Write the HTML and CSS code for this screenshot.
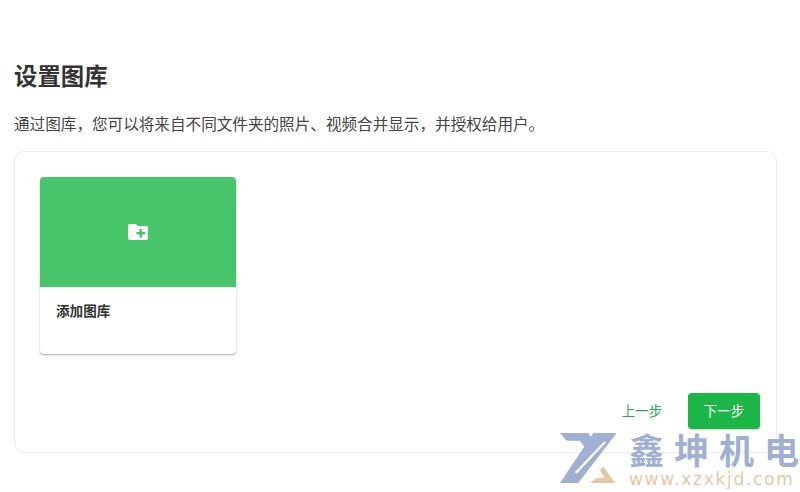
FILE: index.html
```html
<!DOCTYPE html>
<html lang="zh-CN">
<head>
  <meta charset="UTF-8" />
  <title>设置图库</title>
  <link rel="stylesheet" href="styles.css">
</head>
<body>
  <div class="page">
    <h2 class="title">设置图库</h2>
    <p class="intro">通过图库，您可以将来自不同文件夹的照片、视频合并显示，并授权给用户。</p>

    <div class="panel">
      <div class="library-card">
        <div class="library-cover">
          <svg class="folder-icon" viewBox="0 0 24 24">
            <path fill="#fff" d="M4 4c-1.1 0-2 .9-2 2v12c0 1.1.9 2 2 2h16c1.1 0 2-.9 2-2V8c0-1.100-.9-2-2-2h-8l-2-2H4z"/>
            <path fill="#48c46a" d="M13.500 9h2.500v3h3v2.500h-3v3h-2.500v-3h-3V12h3z"/>
          </svg>
        </div>
        <div class="library-name">添加图库</div>
      </div>

      <div class="actions">
        <button class="btn-text">上一步</button>
        <button class="btn-primary">下一步</button>
      </div>
    </div>
  </div>

  <div class="watermark">
    <svg class="watermark-logo" viewBox="0 0 240 180">
      <path fill="#9fb0d3" d="M15 15H100L130 62 108 85 75 38H35z"/>
      <path fill="#9fb0d3" d="M115 15H185L70 165H15z"/>
      <path fill="none" stroke="#fff" stroke-width="7" d="M150 42L62 135"/>
      <path fill="#e3c9a3" d="M145 115L180 165H105L125 150H150L135 128z"/>
    </svg>
    <div class="watermark-text">
      <div class="watermark-name">鑫坤机电</div>
      <div class="watermark-url">www.xzxkjd.com</div>
    </div>
  </div>
</body>
</html>
```

FILE: styles.css
```css
html, body {
  height: 100%;
}

body {
  margin: 0;
  background: #fff;
  color: #333;
  font-family: "Roboto", "Noto Sans CJK SC", sans-serif;
  overflow: hidden;
  position: relative;
}

.page {
  padding: 62px 23px 0 14px;
}

.title {
  margin: 0;
  font-size: 23.4px;
  line-height: 30px;
  font-weight: 700;
}

.intro {
  margin: 21px 0 0;
  font-size: 15.6px;
  line-height: 24px;
  color: #444;
}

.panel {
  margin-top: 14px;
  height: 302px;
  box-sizing: border-box;
  padding: 25px;
  border: 1px solid #ececec;
  border-radius: 10px;
  display: flex;
  flex-direction: column;
  justify-content: space-between;
}

.library-card {
  width: 196px;
  height: 177px;
  border-radius: 4px;
  background: #fff;
  overflow: hidden;
  box-shadow: 0 1px 2px rgba(0, 0, 0, 0.35);
}

.library-cover {
  height: 110px;
  background: #48c46a;
  display: flex;
  align-items: center;
  justify-content: center;
}

.folder-icon {
  width: 24px;
  height: 24px;
}

.library-name {
  padding: 14px 16px;
  font-size: 13.600px;
  line-height: 20px;
  font-weight: 700;
}

.actions {
  display: flex;
  justify-content: flex-end;
  align-items: center;
  gap: 10px;
  margin-right: -9px;
  margin-bottom: -2px;
}

button {
  font-family: inherit;
  font-size: 13.600px;
  border: none;
  cursor: pointer;
  height: 36px;
  width: 72px;
  padding: 0 0 2px;
  border-radius: 4px;
}

.btn-text {
  background: none;
  color: #2fa84f;
}

.btn-primary {
  background: #1cb547;
  color: #fff;
  box-shadow: 0 1px 2px rgba(0, 0, 0, 0.2);
}

.watermark {
  position: absolute;
  left: 555px;
  top: 428px;
  display: flex;
}

.watermark-logo {
  width: 80px;
  height: 60px;
}

.watermark-text {
  margin-left: -6px;
  width: 170px;
}

.watermark-name {
  font-family: "Noto Sans CJK SC", sans-serif;
  font-weight: 700;
  font-size: 35px;
  line-height: 42px;
  color: #9fb0d3;
  text-align: justify;
  text-align-last: justify;
}

.watermark-url {
  font-family: "DejaVu Sans", sans-serif;
  font-size: 17px;
  line-height: 18px;
  letter-spacing: 1.7px;
  white-space: nowrap;
  color: #e3c9a3;
}
```
